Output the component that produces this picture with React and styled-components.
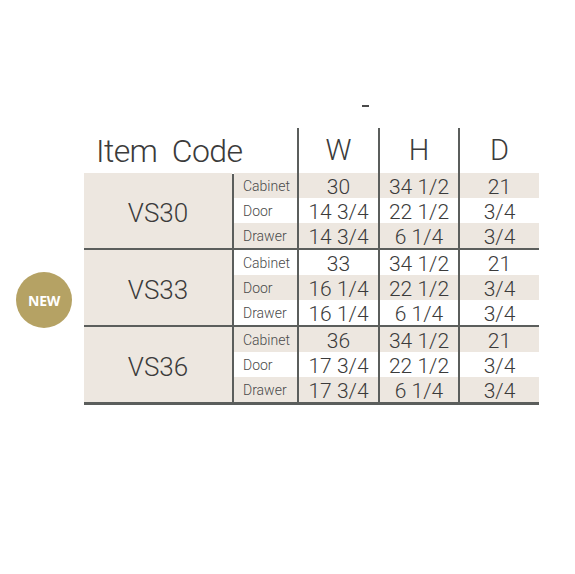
import styled, { createGlobalStyle } from "styled-components";

const LINE = "#5b5e5c";
const BEIGE = "#ede7e0";
const INK = "#3b3b3b";

const GlobalStyle = createGlobalStyle`
  html, body {
    margin: 0;
    padding: 0;
    background: #ffffff;
  }
  body {
    font-family: Roboto, "Liberation Sans", sans-serif;
    color: ${INK};
  }
`;

const items = [
  { code: "VS30", rows: [["Cabinet", "30", "34 1/2", "21"], ["Door", "14 3/4", "22 1/2", "3/4"], ["Drawer", "14 3/4", "6 1/4", "3/4"]] },
  { code: "VS33", rows: [["Cabinet", "33", "34 1/2", "21"], ["Door", "16 1/4", "22 1/2", "3/4"], ["Drawer", "16 1/4", "6 1/4", "3/4"]] },
  { code: "VS36", rows: [["Cabinet", "36", "34 1/2", "21"], ["Door", "17 3/4", "22 1/2", "3/4"], ["Drawer", "17 3/4", "6 1/4", "3/4"]] },
];

export default function App() {
  return (
    <>
      <GlobalStyle />
      <Page>
        <BadgeSlot>
          <Badge>NEW</Badge>
        </BadgeSlot>
        <Sheet>
          <Mark />
          <Header>
            <TitleCell>Item  Code</TitleCell>
            <HeadCell>W</HeadCell>
            <HeadCell>H</HeadCell>
            <HeadCell>D</HeadCell>
          </Header>
          <Body>
            {items.map((item, g) => (
              <Group key={item.code}>
                <CodeCell>{item.code}</CodeCell>
                {item.rows.map((row, r) => {
                  const shaded = (g * 3 + r) % 2 === 0;
                  return row.map((v, c) =>
                    c === 0 ? (
                      <LabelCell key={c} $shaded={shaded}>{v}</LabelCell>
                    ) : (
                      <ValueCell key={c} $shaded={shaded}>{v}</ValueCell>
                    )
                  );
                })}
              </Group>
            ))}
          </Body>
        </Sheet>
      </Page>
    </>
  );
}

const Page = styled.div`
  display: flex;
  width: 575px;
  height: 574px;
  padding-left: 16px;
  box-sizing: border-box;
`;

const BadgeSlot = styled.div`
  width: 68px;
  padding-top: 272px;
`;

const Badge = styled.div`
  width: 56px;
  height: 56px;
  border-radius: 50%;
  background: #b5a264;
  color: #ffffff;
  font-family: "Open Sans", Roboto, sans-serif;
  font-weight: 700;
  font-size: 14px;
  letter-spacing: -0.3px;
  display: flex;
  align-items: center;
  justify-content: center;
`;

const Sheet = styled.div`
  width: 455px;
`;

const Mark = styled.div`
  width: 7px;
  height: 2px;
  background: #4a4a4a;
  margin: 105px 0 21px 278px;
`;

const cols = "148px 63px 79px 78px 79px";

const Header = styled.div`
  display: grid;
  grid-template-columns: ${cols};
  column-gap: 2px;
  height: 42px;
  background: ${LINE};
  border-bottom: 3px solid ${LINE};
`;

const TitleCell = styled.div`
  grid-column: span 2;
  background: #ffffff;
  white-space: pre;
  font-size: 32px;
  font-weight: 300;
  letter-spacing: -0.6px;
  padding-left: 12px;
  line-height: 46px;
`;

const HeadCell = styled.div`
  background: #ffffff;
  text-align: center;
  font-size: 29px;
  font-weight: 300;
  line-height: 45px;
`;

const Body = styled.div`
  display: flex;
  flex-direction: column;
  gap: 2px;
  background: ${LINE};
  border-bottom: 3px solid ${LINE};
`;

const Group = styled.div`
  display: grid;
  grid-template-columns: ${cols};
  grid-template-rows: repeat(3, 25px);
  column-gap: 2px;
`;

const CodeCell = styled.div`
  grid-row: span 3;
  background: ${BEIGE};
  display: flex;
  align-items: center;
  justify-content: center;
  font-size: 26px;
  font-weight: 300;
  padding-top: 4px;
`;

const LabelCell = styled.div`
  background: ${(p) => (p.$shaded ? BEIGE : "#ffffff")};
  font-size: 14px;
  font-weight: 300;
  color: #4a4a4a;
  padding-left: 9px;
  line-height: 27px;
`;

const ValueCell = styled.div`
  background: ${(p) => (p.$shaded ? BEIGE : "#ffffff")};
  text-align: center;
  font-size: 21px;
  font-weight: 300;
  line-height: 28px;
`;
